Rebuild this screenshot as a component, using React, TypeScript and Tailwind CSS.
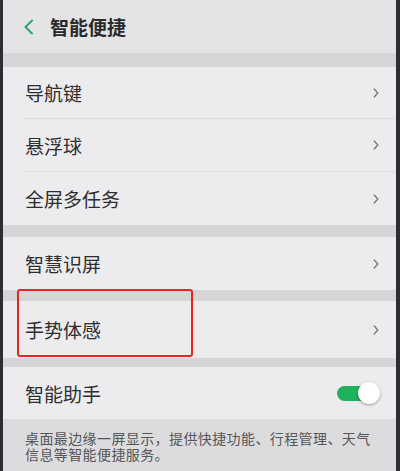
const font = { fontFamily: '"Noto Sans CJK SC", "Noto Sans", sans-serif' };

function BackIcon() {
  return (
    <svg aria-hidden="true" viewBox="0 0 12 16" className="h-[16px] w-[12px]">
      <path
        d="M9 1.5 2.5 8 9 14.5"
        fill="none"
        stroke="#2f9e79"
        strokeWidth="2"
        strokeLinecap="round"
        strokeLinejoin="round"
      />
    </svg>
  );
}

function ChevronIcon() {
  return (
    <svg aria-hidden="true" viewBox="0 0 6 10" className="h-[10px] w-[6px]">
      <path
        d="M1.2 1 4.8 5 1.2 9"
        fill="none"
        stroke="#7a7a7c"
        strokeWidth="1.4"
        strokeLinecap="round"
        strokeLinejoin="round"
      />
    </svg>
  );
}

function Row({
  label,
  height = "h-[53px]",
  divider = false,
}: {
  label: string;
  height?: string;
  divider?: boolean;
}) {
  return (
    <div className="bg-[#ececee] pl-[20px]">
      <div
        className={[
          "flex items-center justify-between pl-[2px] pr-[17px]",
          height,
          divider ? "border-b border-[#dcdcde]" : "",
        ].join(" ")}
      >
        <span className="text-[19px] leading-none text-[#2e2e2f]">{label}</span>
        <ChevronIcon />
      </div>
    </div>
  );
}

function Band({ height }: { height: string }) {
  return <div className={["bg-[#d6d6d8]", height].join(" ")} />;
}

export default function App() {
  return (
    <div
      style={font}
      className="relative flex h-[471px] w-[400px] flex-col overflow-hidden border-l-[3px] border-r-[4px] border-[#2a2f32] bg-[#ececee]"
    >
      <header className="flex h-[53px] items-center gap-[15px] bg-[#e4e4e6] pl-[20px]">
        <BackIcon />
        <h1 className="text-[19px] font-bold leading-none text-[#2a2a2b]">智能便捷</h1>
      </header>

      <Band height="h-[14px]" />
      <Row label="导航键" height="h-[52px]" divider />
      <Row label="悬浮球" divider />
      <Row label="全屏多任务" />

      <Band height="h-[12px]" />
      <Row label="智慧识屏" />

      <Band height="h-[11px]" />
      <Row label="手势体感" height="h-[57px]" />

      <Band height="h-[9px]" />
      <div className="flex h-[52px] items-center justify-between bg-[#ececee] pl-[22px] pr-[16px]">
        <span className="text-[19px] leading-none text-[#2e2e2f]">智能助手</span>
        <div className="relative h-[22px] w-[43px]">
          <div className="absolute left-0 top-[4px] h-[15px] w-[36px] rounded-full bg-[#1fb25c]" />
          <div className="absolute right-0 top-0 size-[22px] rounded-full bg-white shadow-[0_1px_3px_rgba(0,0,0,0.35)]" />
        </div>
      </div>

      <div className="flex-1 bg-[#dcdcde] pl-[22px] pt-[11px]">
        <p className="w-[350px] text-[14px] leading-[16px] tracking-[0.4px] text-[#565658]">
          桌面最边缘一屏显示，提供快捷功能、行程管理、天气信息等智能便捷服务。
        </p>
      </div>

      <div className="pointer-events-none absolute left-[14px] top-[289px] h-[68px] w-[176px] rounded-[3px] border-2 border-[#ea2420]" />
    </div>
  );
}
